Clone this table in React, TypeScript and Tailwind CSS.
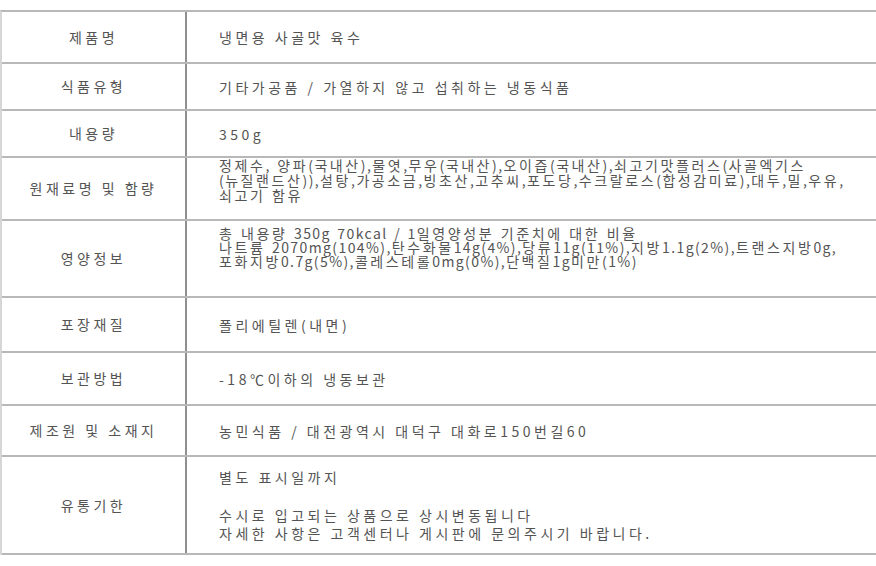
type Row = { label: string; h: string; dense?: string; lines: string[][] };

const ROWS: Row[] = [
  { label: "제품명", h: "h-[52px]", lines: [["냉면용 사골맛 육수"]] },
  { label: "식품유형", h: "h-[47px]", lines: [["기타가공품 / 가열하지 않고 섭취하는 냉동식품"]] },
  { label: "내용량", h: "h-[47px]", lines: [["350g"]] },
  {
    label: "원재료명 및 함량",
    h: "h-[63px]",
    dense: "pt-0 leading-[15px]",
    lines: [
      [
        "정제수, 양파(국내산),물엿,무우(국내산),오이즙(국내산),쇠고기맛플러스(사골엑기스",
        "(뉴질랜드산)),설탕,가공소금,빙초산,고추씨,포도당,수크랄로스(합성감미료),대두,밀,우유,",
        "쇠고기 함유",
      ],
    ],
  },
  {
    label: "영양정보",
    h: "h-[77px]",
    dense: "pt-[5px] leading-[14px]",
    lines: [
      [
        "총 내용량 350g 70kcal / 1일영양성분 기준치에 대한 비율",
        "나트륨 2070mg(104%),탄수화물14g(4%),당류11g(11%),지방1.1g(2%),트랜스지방0g,",
        "포화지방0.7g(5%),콜레스테롤0mg(0%),단백질1g미만(1%)",
      ],
    ],
  },
  { label: "포장재질", h: "h-[55px]", lines: [["폴리에틸렌(내면)"]] },
  { label: "보관방법", h: "h-[53px]", lines: [["-18℃이하의 냉동보관"]] },
  { label: "제조원 및 소재지", h: "h-[51px]", lines: [["농민식품 / 대전광역시 대덕구 대화로150번길60"]] },
  {
    label: "유통기한",
    h: "h-[98px]",
    lines: [
      ["별도 표시일까지"],
      ["수시로 입고되는 상품으로 상시변동됩니다", "자세한 사항은 고객센터나 게시판에 문의주시기 바랍니다."],
    ],
  },
];

// hangul runs get a wider tracking than digits and punctuation in the dense rows
function DenseLine({ text }: { text: string }) {
  return (
    <span className="block whitespace-nowrap tracking-[1.4px] [word-spacing:2px]">
      {text.split(/([가-힣]+)/).map((part, k) =>
        /[가-힣]/.test(part) ? (
          <span key={k} className="tracking-[2.6px]">
            {part}
          </span>
        ) : (
          part
        )
      )}
    </span>
  );
}

export default function App() {
  return (
    <div
      className="w-[876px] h-[566px] bg-white pt-[10px] text-[14px] text-[#545454]"
      style={{ fontFamily: '"Noto Sans CJK KR", "Noto Sans", sans-serif' }}
    >
      <div className="border-t-2 border-l-2 border-t-[#b8b8b8] border-l-[#d6d6d6]">
        {ROWS.map((row) => (
          <div key={row.label} className={`flex border-b-2 border-[#b8b8b8] ${row.h}`}>
            <div className="w-[185px] shrink-0 flex items-center justify-center border-r-2 border-[#8f8f8f] tracking-[3.5px]">
              {row.label}
            </div>
            <div
              className={`flex-1 flex flex-col pl-[32px] ${
                row.dense ? `justify-start ${row.dense}` : "justify-center tracking-[3.5px] leading-[18px] gap-[20px]"
              }`}
            >
              {row.lines.map((para, i) => (
                <p key={i}>
                  {para.map((line, j) =>
                    row.dense ? (
                      <DenseLine key={j} text={line} />
                    ) : (
                      <span key={j} className="block whitespace-nowrap">
                        {line}
                      </span>
                    )
                  )}
                </p>
              ))}
            </div>
          </div>
        ))}
      </div>
    </div>
  );
}
